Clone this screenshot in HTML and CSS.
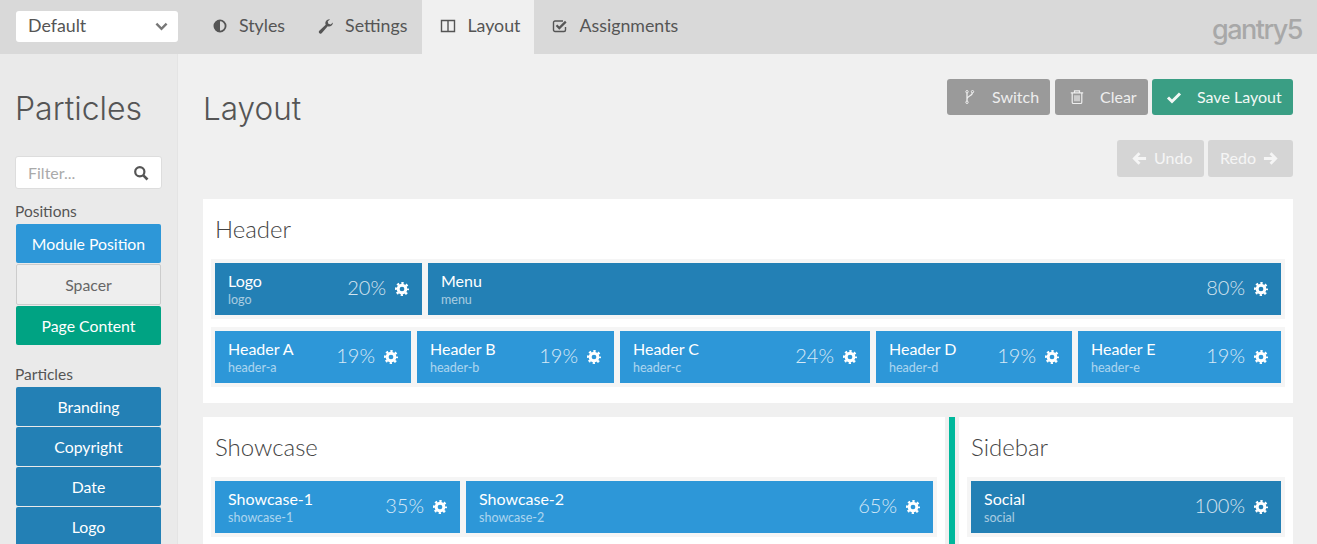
FILE: index.html
```html
<!DOCTYPE html>
<html lang="en">
  <head>
    <meta charset="UTF-8" />
    <title>Gantry 5 Layout</title>
    <link rel="stylesheet" href="styles.css">
  </head>
  <body>
    <svg class="sprite" width="0" height="0">
      <symbol id="i-cog" viewBox="0 0 16 16">
        <circle cx="8" cy="8" r="4.4" fill="none" stroke="currentColor" stroke-width="3.4" />
        <circle cx="8" cy="8" r="6.7" fill="none" stroke="currentColor" stroke-width="2.6" pathLength="32" stroke-dasharray="2 2" stroke-dashoffset="1" />
      </symbol>
    </svg>

    <header class="topbar">
      <div class="select">
        Default
        <svg class="select-arrow" viewBox="0 0 14 10"><path d="M1.5 2.5 7 8l5.5-5.5" fill="none" stroke="currentColor" stroke-width="2.6" /></svg>
      </div>
      <nav class="tabs">
        <a class="tab">
          <svg class="tab-icon" viewBox="0 0 16 16"><circle cx="8" cy="8" r="5.6" fill="none" stroke="currentColor" stroke-width="1.8" /><path d="M8 2.4a5.6 5.6 0 0 0 0 11.2z" fill="currentColor" /></svg>
          Styles
        </a>
        <a class="tab">
          <svg class="tab-icon" viewBox="0 0 16 16"><path d="M15 4.4a4 4 0 0 1-5.3 3.8L3.9 15a1.7 1.7 0 0 1-2.6-2.2l6.4-6A4 4 0 0 1 12 1.2L9.7 3.5l.6 2.3 2.3.6z" fill="currentColor" /></svg>
          Settings
        </a>
        <a class="tab active">
          <svg class="tab-icon" viewBox="0 0 16 16"><path d="M1.500 2.500h13v11h-13zM8 2.500v11" fill="none" stroke="currentColor" stroke-width="1.4" /></svg>
          Layout
        </a>
        <a class="tab">
          <svg class="tab-icon" viewBox="0 0 16 16"><path d="M13.500 9v3a1.500 1.500 0 0 1-1.500 1.500H3A1.500 1.500 0 0 1 1.500 12V4.500A1.500 1.500 0 0 1 3 3h8" fill="none" stroke="currentColor" stroke-width="1.4" /><path d="m4.500 7.300 2.800 2.800 6.500-6.500" fill="none" stroke="currentColor" stroke-width="2.2" /></svg>
          Assignments
        </a>
      </nav>
      <div class="brand">gantry5</div>
    </header>

    <div class="page">
      <aside class="sidebar">
        <h2 class="sidebar-title">Particles</h2>
        <div class="filter">
          <span>Filter...</span>
          <svg class="filter-icon" viewBox="0 0 16 16"><circle cx="6.8" cy="6.8" r="4.6" fill="none" stroke="currentColor" stroke-width="2.2" /><path d="m10.300 10.300 4.200 4.200" stroke="currentColor" stroke-width="2.6" /></svg>
        </div>
        <div class="group-label">Positions</div>
        <div class="chip chip-blue">Module Position</div>
        <div class="chip chip-spacer">Spacer</div>
        <div class="chip chip-green">Page Content</div>
        <div class="group-label group-label-second">Particles</div>
        <div class="chip chip-dark">Branding</div>
        <div class="chip chip-dark">Copyright</div>
        <div class="chip chip-dark">Date</div>
        <div class="chip chip-dark">Logo</div>
      </aside>

      <main class="main">
        <div class="main-head">
          <h1 class="main-title">Layout</h1>
          <div class="actions">
            <div class="btn-row">
              <a class="btn btn-gray btn-switch">
                <svg class="btn-icon" viewBox="0 0 16 16"><path d="M7 3.500v9M12.500 3.500c0 4-5.500 3-5.500 6.500" fill="none" stroke="currentColor" stroke-width="1.3" /><circle cx="7" cy="2.700" r="1.200" fill="none" stroke="currentColor" /><circle cx="12.500" cy="2.700" r="1.200" fill="none" stroke="currentColor" /><circle cx="7" cy="13.300" r="1.200" fill="none" stroke="currentColor" /></svg>
                Switch
              </a>
              <a class="btn btn-gray btn-clear">
                <svg class="btn-icon" viewBox="0 0 16 16"><path d="M1.800 3.800h12.400M5.500 3.500V1.800h5v1.700M3.200 4v9.200c0 .8.500 1.300 1.200 1.300h7.200c.7 0 1.200-.5 1.200-1.300V4M6 6.200v6M8 6.200v6M10 6.200v6" fill="none" stroke="currentColor" stroke-width="1.2" /></svg>
                Clear
              </a>
              <a class="btn btn-save">
                <svg class="btn-icon" viewBox="0 0 16 16"><path d="m2 8.500 4 4 8-8" fill="none" stroke="currentColor" stroke-width="3" /></svg>
                Save Layout
              </a>
            </div>
            <div class="btn-row btn-row-history">
              <a class="btn btn-off btn-undo">
                <svg class="arrow" viewBox="0 0 16 16"><path d="M8 2.500 2.500 8 8 13.500M3 8h12" fill="none" stroke="currentColor" stroke-width="3" /></svg>
                Undo
              </a>
              <a class="btn btn-off btn-redo">
                Redo
                <svg class="arrow" viewBox="0 0 16 16"><path d="M8 2.500 13.500 8 8 13.500M13 8H1" fill="none" stroke="currentColor" stroke-width="3" /></svg>
              </a>
            </div>
          </div>
        </div>

        <section class="panel">
          <h3 class="panel-title">Header</h3>
          <div class="row">
            <div class="block dark" style="flex-basis: 207px">
              <div class="block-text"><div class="block-name">Logo</div><div class="block-id">logo</div></div>
              <span class="block-size">20%</span><svg class="cog"><use href="#i-cog" /></svg>
            </div>
            <div class="block dark" style="flex-basis: 853px">
              <div class="block-text"><div class="block-name">Menu</div><div class="block-id">menu</div></div>
              <span class="block-size">80%</span><svg class="cog"><use href="#i-cog" /></svg>
            </div>
          </div>
          <div class="row">
            <div class="block" style="flex-basis: 196px">
              <div class="block-text"><div class="block-name">Header A</div><div class="block-id">header-a</div></div>
              <span class="block-size">19%</span><svg class="cog"><use href="#i-cog" /></svg>
            </div>
            <div class="block" style="flex-basis: 197px">
              <div class="block-text"><div class="block-name">Header B</div><div class="block-id">header-b</div></div>
              <span class="block-size">19%</span><svg class="cog"><use href="#i-cog" /></svg>
            </div>
            <div class="block" style="flex-basis: 250px">
              <div class="block-text"><div class="block-name">Header C</div><div class="block-id">header-c</div></div>
              <span class="block-size">24%</span><svg class="cog"><use href="#i-cog" /></svg>
            </div>
            <div class="block" style="flex-basis: 196px">
              <div class="block-text"><div class="block-name">Header D</div><div class="block-id">header-d</div></div>
              <span class="block-size">19%</span><svg class="cog"><use href="#i-cog" /></svg>
            </div>
            <div class="block" style="flex-basis: 203px">
              <div class="block-text"><div class="block-name">Header E</div><div class="block-id">header-e</div></div>
              <span class="block-size">19%</span><svg class="cog"><use href="#i-cog" /></svg>
            </div>
          </div>
        </section>

        <div class="split">
          <section class="panel panel-wide">
            <h3 class="panel-title">Showcase</h3>
            <div class="row">
              <div class="block" style="flex-basis: 245px">
                <div class="block-text"><div class="block-name">Showcase-1</div><div class="block-id">showcase-1</div></div>
                <span class="block-size">35%</span><svg class="cog"><use href="#i-cog" /></svg>
              </div>
              <div class="block" style="flex-basis: 467px">
                <div class="block-text"><div class="block-name">Showcase-2</div><div class="block-id">showcase-2</div></div>
                <span class="block-size">65%</span><svg class="cog"><use href="#i-cog" /></svg>
              </div>
            </div>
          </section>
          <div class="divider"></div>
          <section class="panel panel-side">
            <h3 class="panel-title">Sidebar</h3>
            <div class="row">
              <div class="block dark" style="flex-basis: 310px">
                <div class="block-text"><div class="block-name">Social</div><div class="block-id">social</div></div>
                <span class="block-size">100%</span><svg class="cog"><use href="#i-cog" /></svg>
              </div>
            </div>
          </section>
        </div>
      </main>
    </div>
  </body>
</html>
```

FILE: styles.css
```css
* {
  padding: 0;
  margin: 0;
  box-sizing: border-box;
}

body {
  height: 544px;
  overflow: hidden;
  background-color: #f0f0f0;
  color: #555;
  font-family: "Lato", sans-serif;
  font-size: 16px;
}

.sprite {
  position: absolute;
}

.topbar {
  display: flex;
  align-items: center;
  height: 54px;
  padding: 0 15px 0 16px;
  background-color: #d9d9d9;
}

.select {
  display: flex;
  align-items: center;
  justify-content: space-between;
  width: 162px;
  height: 31px;
  margin-top: -1px;
  padding: 0 10px 3px 12px;
  border-radius: 3px;
  background-color: #fff;
  font-size: 17.8px;
}

.select-arrow {
  width: 13px;
  height: 10px;
  margin-top: 2px;
  color: #777;
}

.tabs {
  display: flex;
  align-self: stretch;
  margin-left: 16px;
}

.tab {
  display: flex;
  align-items: center;
  gap: 11px;
  padding: 0 15px 4px 18px;
  font-size: 17.8px;
}

.tab.active {
  padding-right: 14px;
  background-color: #f0f0f0;
}

.tab-icon {
  width: 16px;
  height: 16px;
  margin-top: 2px;
}

.brand {
  margin-left: auto;
  margin-top: 4px;
  color: #a8a8a8;
  font-family: "Inter", sans-serif;
  font-size: 27px;
  font-weight: 500;
  letter-spacing: -1.5px;
}

.page {
  display: flex;
  height: 490px;
}

.sidebar {
  flex: 0 0 178px;
  padding: 37px 15px 0 15px;
  border-right: 1px solid #e4e4e4;
  background-color: #eaeaea;
}

.sidebar-title {
  font-family: "Inter", sans-serif;
  font-size: 32px;
  font-weight: 300;
  line-height: 36px;
}

.filter {
  display: flex;
  align-items: center;
  justify-content: space-between;
  height: 33px;
  margin-top: 29px;
  padding: 0 12px 0 12px;
  border: 1px solid #ddd;
  border-radius: 3px;
  background-color: #fff;
  color: #aaa;
}

.filter-icon {
  width: 16px;
  height: 16px;
  color: #555;
}

.group-label {
  margin-top: 14px;
  margin-bottom: 4px;
  font-size: 15.5px;
  line-height: 17px;
}

.group-label-second {
  margin-top: 21px;
  margin-bottom: 4px;
}

.chip {
  display: flex;
  align-items: center;
  justify-content: center;
  width: 145px;
  height: 39px;
  margin-left: 1px;
  margin-bottom: 1px;
  border-radius: 2px;
  color: #fff;
  font-size: 15.8px;
}

.chip-blue {
  background-color: #2d97d8;
}

.chip-spacer {
  height: 41px;
  border: 1px solid #ccc;
  background-color: #eee;
  color: #666;
}

.chip-green {
  background-color: #00a383;
}

.chip-dark {
  background-color: #2380b5;
}

.main {
  flex: 1;
  padding: 25px 24px 0 25px;
  min-width: 0;
}

.main-head {
  display: flex;
  justify-content: space-between;
  height: 120px;
}

.main-title {
  margin-top: 12px;
  font-family: "Inter", sans-serif;
  font-size: 31.5px;
  font-weight: 300;
  line-height: 36px;
}

.actions {
  display: flex;
  flex-direction: column;
  align-items: flex-end;
  gap: 25px;
}

.btn-row {
  display: flex;
  gap: 4px;
}

.btn {
  display: flex;
  align-items: center;
  height: 36px;
  padding: 0 0 2px 12px;
  border-radius: 3px;
  color: #fff;
  white-space: nowrap;
}

.btn-gray {
  background-color: #9a9a9a;
  color: #eee;
}

.btn-switch {
  width: 103px;
  margin-right: 1px;
  padding-left: 13px;
}

.btn-switch .btn-icon {
  margin-right: 16px;
}

.btn-clear {
  width: 93px;
  padding-left: 14px;
}

.btn-save {
  width: 141px;
  padding-left: 14px;
  background-color: #3a9e84;
  color: #f1f8f5;
}

.btn-icon {
  width: 16px;
  height: 16px;
  margin-top: 2px;
  margin-right: 15px;
}

.btn-off {
  gap: 7px;
  height: 37px;
  background-color: #d5d5d5;
  color: #f5f5f5;
}

.btn-undo {
  width: 87px;
  padding-left: 15px;
}

.btn-redo {
  width: 85px;
  padding-left: 12px;
}

.arrow {
  width: 15px;
  height: 15px;
  margin-top: 2px;
}

.panel {
  padding: 12px 8px 16px;
  background-color: #fff;
}

.panel-title {
  margin-left: 4px;
  margin-bottom: 12px;
  font-size: 24px;
  font-weight: 300;
  line-height: 36px;
  color: #444;
}

.row {
  display: flex;
  gap: 6px;
  padding: 4px;
  background-color: #f5f5f5;
}

.row + .row {
  margin-top: 8px;
}

.block {
  display: flex;
  align-items: center;
  flex: 0 0 auto;
  height: 52px;
  padding: 0 13px;
  background-color: #2d97d8;
  color: #fff;
}

.block.dark {
  background-color: #2380b5;
}

.block-text {
  flex: 1;
  min-width: 0;
}

.block-name {
  font-size: 16px;
  line-height: 19px;
  margin-top: 1px;
}

.block-id {
  font-size: 12.5px;
  line-height: 18px;
  margin-top: 1px;
  opacity: 0.6;
}

.block-size {
  margin-right: 9px;
  margin-bottom: 4px;
  font-size: 20px;
  font-weight: 300;
  opacity: 0.8;
}

.cog {
  width: 14px;
  height: 14px;
}

.split {
  display: flex;
  margin-top: 14px;
}

.panel-wide {
  flex: 0 0 742px;
}

.divider {
  flex: 0 0 6px;
  margin: 0 4px;
  background-color: #00b89c;
}

.panel-side {
  flex: 1;
}
```
